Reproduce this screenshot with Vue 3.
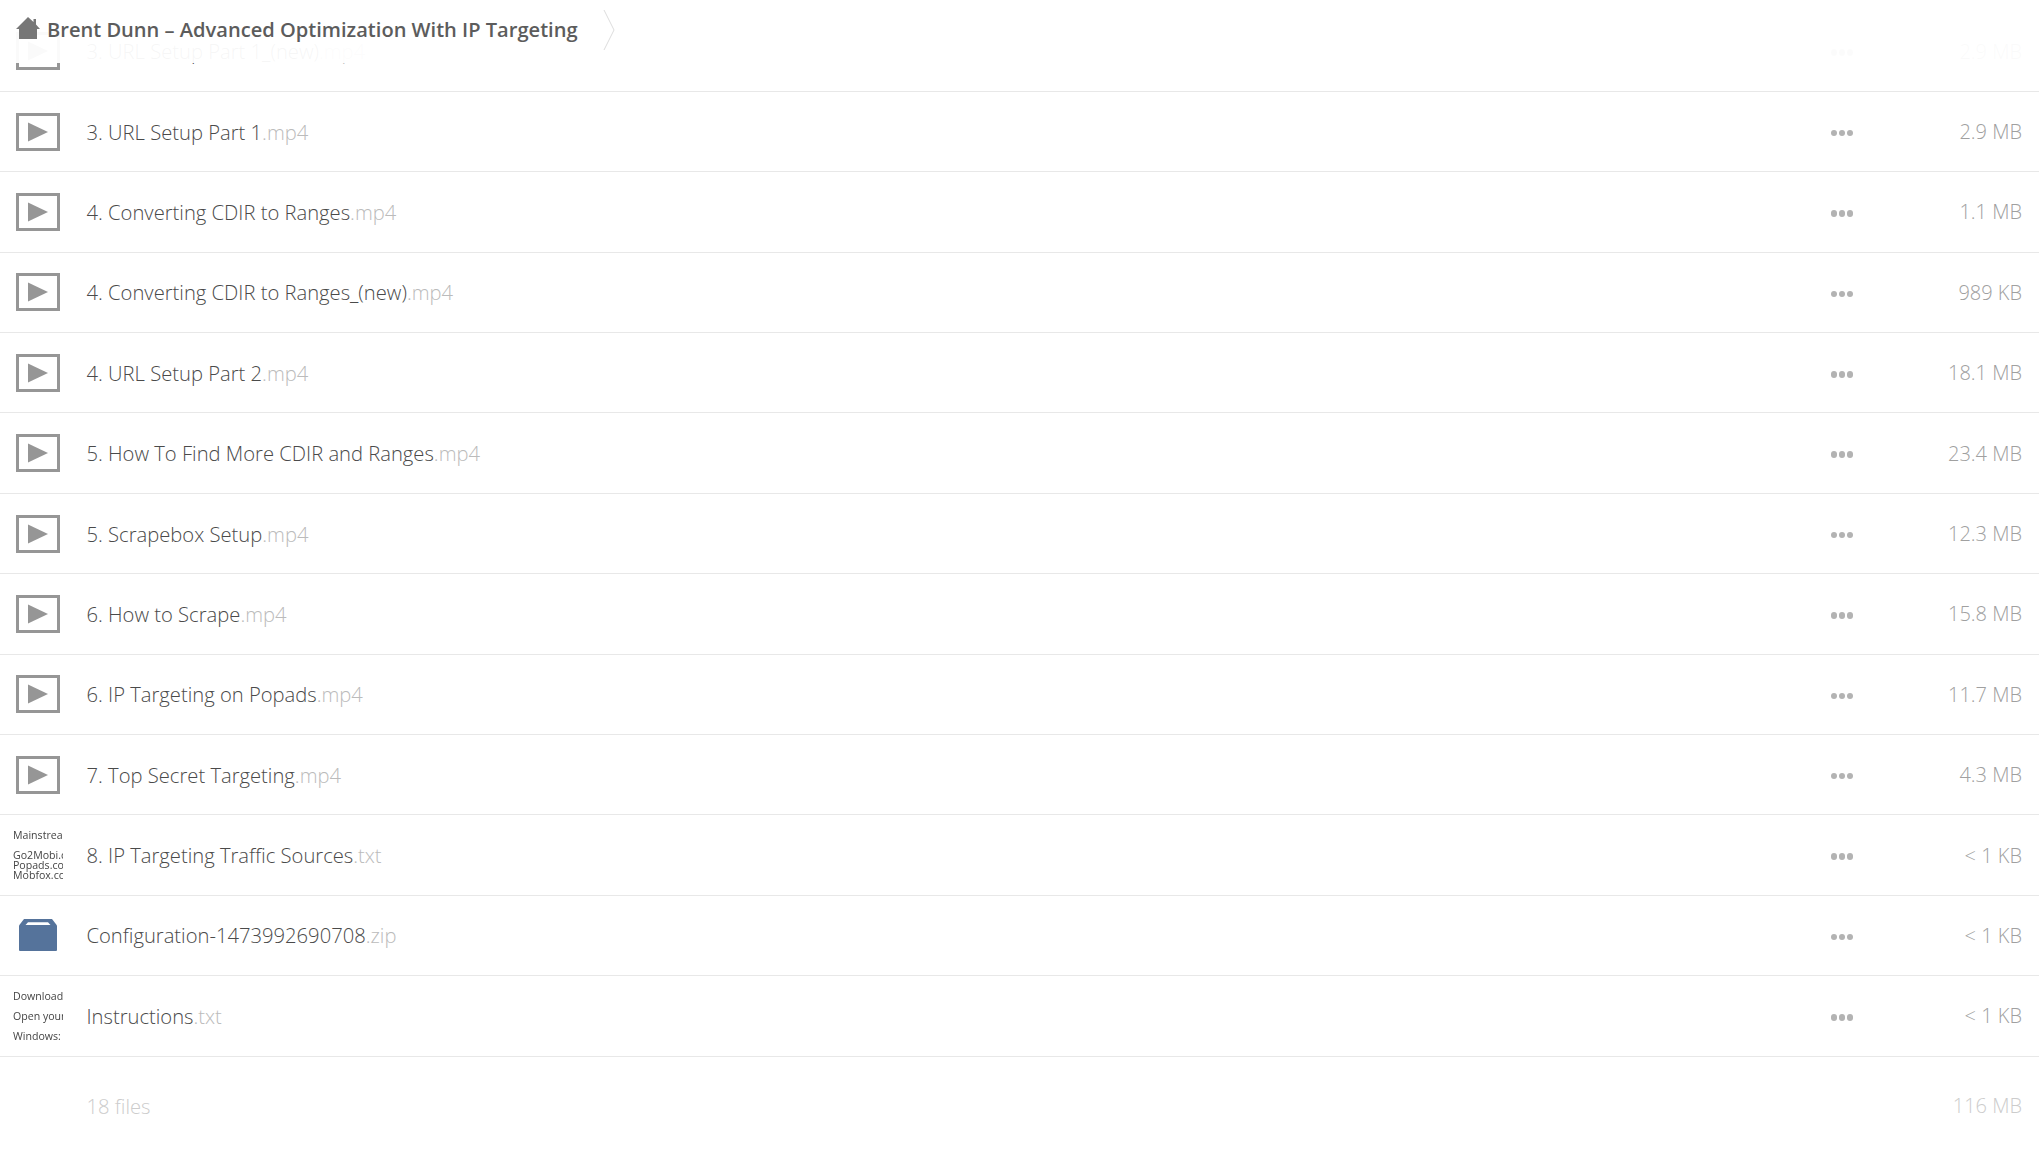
<script setup>
const rows = [
  { name: '3. URL Setup Part 1_(new)', ext: '.mp4', size: '2.9 MB', kind: 'video' },
  { name: '3. URL Setup Part 1', ext: '.mp4', size: '2.9 MB', kind: 'video' },
  { name: '4. Converting CDIR to Ranges', ext: '.mp4', size: '1.1 MB', kind: 'video' },
  { name: '4. Converting CDIR to Ranges_(new)', ext: '.mp4', size: '989 KB', kind: 'video' },
  { name: '4. URL Setup Part 2', ext: '.mp4', size: '18.1 MB', kind: 'video' },
  { name: '5. How To Find More CDIR and Ranges', ext: '.mp4', size: '23.4 MB', kind: 'video' },
  { name: '5. Scrapebox Setup', ext: '.mp4', size: '12.3 MB', kind: 'video' },
  { name: '6. How to Scrape', ext: '.mp4', size: '15.8 MB', kind: 'video' },
  { name: '6. IP Targeting on Popads', ext: '.mp4', size: '11.7 MB', kind: 'video' },
  { name: '7. Top Secret Targeting', ext: '.mp4', size: '4.3 MB', kind: 'video' },
  { name: '8. IP Targeting Traffic Sources', ext: '.txt', size: '< 1 KB', kind: 'text', lines: ['Mainstream', '', 'Go2Mobi.com', 'Popads.com', 'Mobfox.com'] },
  { name: 'Configuration-1473992690708', ext: '.zip', size: '< 1 KB', kind: 'zip' },
  { name: 'Instructions', ext: '.txt', size: '< 1 KB', kind: 'notes', lines: ['Download', 'Open your', 'Windows:'] }
]
</script>

<template>
  <div class="page">
    <header class="crumbs">
      <svg class="home" viewBox="0 0 24 22" width="24" height="22">
        <path d="M12 0 L17.5 5 V2 H20 V7.5 L24 12 H21 V22 H3 V12 H0 Z" fill="#777" />
      </svg>
      <span class="title">Brent Dunn – Advanced Optimization With IP Targeting</span>
      <svg class="sep" viewBox="0 0 12 42" width="12" height="42">
        <path d="M1 1 L11 21 L1 41" fill="none" stroke="#ddd" stroke-width="1" />
      </svg>
    </header>

    <div class="list">
      <div v-for="r in rows" :key="r.name" class="row">
        <div class="thumb">
          <svg v-if="r.kind === 'video'" viewBox="0 0 44 38" width="44" height="38">
            <rect x="1.5" y="1.5" width="41" height="35" fill="#fff" stroke="#969696" stroke-width="3" />
            <path d="M12 9.5 L32 19 L12 28.5 Z" fill="#969696" />
          </svg>
          <svg v-else-if="r.kind === 'zip'" viewBox="0 0 38 32" width="38" height="32">
            <path d="M5 0 H33 L38 6.5 V31 Q38 32 37 32 H1 Q0 32 0 31 V6.5 Z" fill="#55739b" />
            <path d="M9 3.2 H29 L31.5 6 H6.5 Z" fill="#fff" />
          </svg>
          <div v-else :class="['preview', r.kind]">
            <div v-for="(l, i) in r.lines" :key="i" class="preview-line">{{ l || '\u00a0' }}</div>
          </div>
        </div>
        <div class="name">{{ r.name }}<span class="ext">{{ r.ext }}</span></div>
        <div class="more"><i></i><i></i><i></i></div>
        <div class="size">{{ r.size }}</div>
      </div>
      <div class="summary">
        <div class="name">18 files</div>
        <div class="size">116 MB</div>
      </div>
    </div>
  </div>
</template>

<style>
html, body { background: #fff; }
</style>

<style scoped>
.page {
  position: relative;
  height: 1156px;
  overflow: hidden;
  background: #fff;
  font-family: "Open Sans", "Liberation Sans", sans-serif;
  font-weight: 300;
  color: #555;
}
.crumbs {
  position: absolute;
  top: 0;
  left: 0;
  right: 0;
  height: 63px;
  display: flex;
  align-items: center;
  padding-left: 16px;
  padding-bottom: 4px;
  background: rgba(255, 255, 255, 0.95);
  z-index: 2;
  box-sizing: border-box;
}
.home { flex: none; margin-bottom: 3px; }
.title {
  margin-left: 7px;
  font-size: 20.08px;
  font-weight: 600;
  color: #5c5c5c;
}
.sep { margin-left: 25px; }
.list { padding-top: 11.5px; }
.row {
  height: 80.4px;
  box-sizing: border-box;
  display: flex;
  align-items: center;
  border-bottom: 1px solid #e8e8e8;
}
.thumb {
  width: 76px;
  margin-right: 10.5px;
  flex: none;
  display: flex;
  justify-content: center;
  align-items: center;
}
.name {
  flex: 1;
  font-size: 20.2px;
  white-space: nowrap;
  color: #4a4a4a;
}
.ext { color: #bbb; }
.more {
  display: flex;
  gap: 1.5px;
  margin-right: 69px;
  margin-top: 3px;
}
.more i {
  width: 6.5px;
  height: 6.5px;
  border-radius: 50%;
  background: #b3b3b3;
}
.size {
  width: 100px;
  padding-right: 17px;
  text-align: right;
  font-size: 20px;
  color: #a0a0a0;
}
.preview {
  width: 50px;
  height: 64px;
  overflow: hidden;
  font-size: 10.6px;
  font-weight: 500;
  color: #444;
  white-space: nowrap;
  display: flex;
  flex-direction: column;
  justify-content: center;
  filter: blur(0.35px);
}
.preview.text .preview-line { line-height: 10px; }
.preview.notes .preview-line { line-height: 20px; }
.summary {
  display: flex;
  align-items: center;
  height: 98px;
  padding-left: 86.5px;
}
.summary .name, .summary .size { color: #ccc; }
</style>
